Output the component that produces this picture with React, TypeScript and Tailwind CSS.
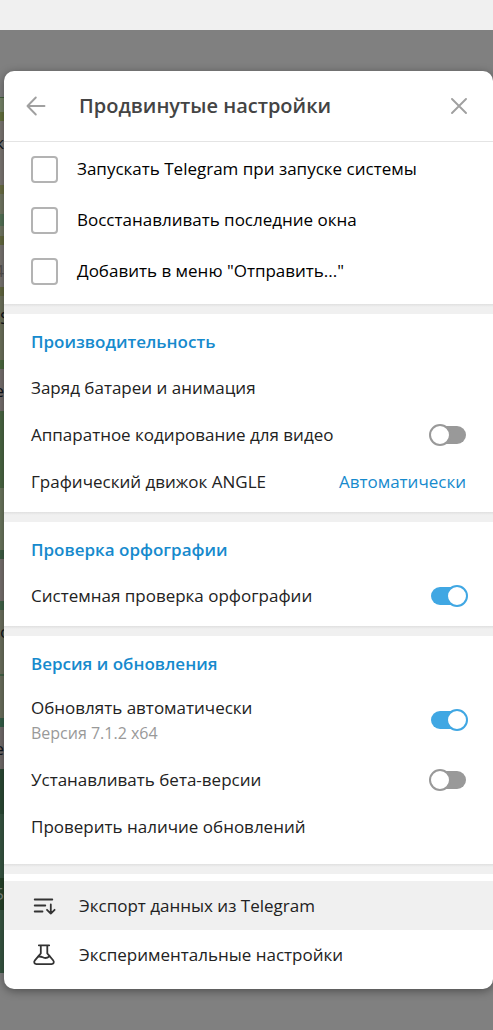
import React, { useState } from 'react';
import { clsx } from 'clsx';

interface ToggleRowProps {
  label: string;
  hint?: string;
  defaultChecked?: boolean;
}

const startupOptions = [
  'Запускать Telegram при запуске системы',
  'Восстанавливать последние окна',
  'Добавить в меню "Отправить..."',
];

// Slice of the dimmed chat that stays visible beside the dialog
const chatBands = [
  { className: 'h-px bg-[#41613c]' },
  { className: 'h-[14px] bg-[#78866a]' },
  { className: 'h-[9px] bg-[#66733f]' },
  { className: 'h-16 bg-[#7d7874]', text: 'к', textClass: 'pt-2.5' },
  { className: 'h-[9px] bg-[#6c7045]' },
  { className: 'h-5 bg-[#747964]' },
  { className: 'h-3 bg-[#557457]' },
  { className: 'h-[10px] bg-[#747964]' },
  { className: 'h-[9px] bg-[#666b40]' },
  { className: 'h-[42px] bg-[#7a7672]', text: '4', textClass: 'pt-3.5 text-[#55524f]' },
  { className: 'h-[9px] bg-[#636940]' },
  { className: 'h-16 bg-[#6e735c]', text: 'S', textClass: 'pt-2.5', start: true },
  { className: 'h-[9px] bg-[#4d6b40]' },
  { className: 'h-[42px] bg-[#77716f]', text: 'е', textClass: 'pt-2.5' },
  { className: 'h-[77px] bg-[#4b6844]' },
  { className: 'h-[62px] bg-[#6c775f]' },
  { className: 'h-[9px] bg-[#3f5f45]' },
  { className: 'h-[42px] bg-[#77716e]' },
  { className: 'h-[9px] bg-[#426449]' },
  { className: 'h-16 bg-[#6d715f]', text: 'с', textClass: 'pt-2.5', start: true },
  { className: 'h-0.5 bg-[#456448]' },
  { className: 'h-[42px] bg-[#6d715f]' },
  { className: 'h-[9px] bg-[#355f48]' },
  { className: 'h-[42px] bg-[#736d6c]', text: 'е', textClass: 'pt-2.5' },
  { className: 'h-[45px] bg-[#2b4a35]' },
  { className: 'h-16 bg-[#375642]' },
  { className: 'h-8 bg-[#264229]', text: '5', textClass: 'pt-1 text-[#7d867f]' },
  { className: 'h-[63px] bg-[#375642]' },
];

const ChatEdge = () => (
  <div className="mt-[26px] w-1 shrink-0" aria-hidden="true">
    {chatBands.map((band, i) => (
      <div
        key={i}
        className={clsx(
          'flex overflow-hidden text-[17px] leading-6 text-[#10151c]',
          band.start ? 'justify-start' : 'justify-end',
          band.className
        )}
      >
        {band.text && <span className={band.textClass}>{band.text}</span>}
      </div>
    ))}
  </div>
);

const BackIcon = () => (
  <svg width="20" height="20" viewBox="0 0 20 20" fill="none" stroke="#a0a0a0" strokeWidth="1.9" strokeLinecap="round" strokeLinejoin="round">
    <path d="M18.500 10H1.500M9.800 1.500 1.500 10l8.300 8.500" />
  </svg>
);

const CloseIcon = () => (
  <svg width="16" height="16" viewBox="0 0 16 16" fill="none" stroke="#a0a0a0" strokeWidth="1.9" strokeLinecap="round">
    <path d="M1 1l14 14M15 1 1 15" />
  </svg>
);

const ExportIcon = () => (
  <svg width="24" height="24" viewBox="0 0 24 24" fill="none" stroke="#333" strokeWidth="1.8" strokeLinecap="round" strokeLinejoin="round">
    <path d="M2.700 5.500H20.300M2.700 11.500H13.300M2.700 17.500H10.500" />
    <path d="M18.800 10.500V19.500M15 15.800l3.800 3.800 3.800-3.800" />
  </svg>
);

const FlaskIcon = () => (
  <svg width="24" height="24" viewBox="0 0 24 24" fill="none" stroke="#333" strokeWidth="1.8" strokeLinecap="round" strokeLinejoin="round">
    <path d="M6.800 2.300H17.200M8.800 2.300V10.400L2.900 17.300C1.500 19 2.300 21.100 4.500 21.100H19.500C21.700 21.100 22.500 19 21.100 17.300L15.300 10.400V2.300" />
    <path d="M6.300 13.600C8.500 13.200 9.900 13.900 11.800 14.700C13.700 15.400 15.500 14.900 17.500 13.200" />
  </svg>
);

const Divider = () => (
  <div className="h-2.5 bg-[#f0f0f0] bg-linear-to-b from-[#e0e0e0] from-0% to-[#f0f0f0] to-30%" />
);

const SectionTitle = ({ children }: { children: React.ReactNode }) => (
  <h2 className="flex h-[45px] items-center font-semibold text-[#168acd]">{children}</h2>
);

const ToggleRow = ({ label, hint, defaultChecked = false }: ToggleRowProps) => {
  const [checked, setChecked] = useState(defaultChecked);

  return (
    <label className={clsx('flex cursor-pointer items-center justify-between', hint ? 'h-[70px] pb-0.5' : 'h-[47px]')}>
      <span className="flex flex-col">
        <span className="leading-[26px]">{label}</span>
        {hint && <span className="text-base leading-6 text-[#999]">{hint}</span>}
      </span>
      <input
        type="checkbox"
        role="switch"
        checked={checked}
        onChange={(e) => setChecked(e.target.checked)}
        className="relative h-[18px] w-[35px] shrink-0 cursor-pointer appearance-none rounded-full bg-[#999] before:absolute before:-top-0.5 before:-left-0.5 before:size-[22px] before:rounded-full before:border-2 before:border-[#999] before:bg-white checked:bg-[#40a7e3] checked:before:left-[15px] checked:before:border-[#40a7e3]"
      />
    </label>
  );
};

const LinkRow = ({ label, value }: { label: string; value?: string }) => (
  <button type="button" className="flex h-[47px] w-full cursor-pointer items-center justify-between text-left">
    <span>{label}</span>
    {value && <span className="text-[#168acd]">{value}</span>}
  </button>
);

export default function App() {
  return (
    <div className="min-h-screen bg-[#808080] font-['Open_Sans','Noto_Sans',sans-serif] text-[17px] text-[#222]">
      <div className="h-[30px] bg-[#f0f0f0]" />

      <div className="flex items-start pt-[41px]">
        <ChatEdge />

        <main className="min-w-0 flex-1 overflow-hidden rounded-[10px] bg-white shadow-[0_2px_10px_rgba(0,0,0,0.4)]">
          <header className="flex h-[71px] items-center border-b border-[#e4e4e4] pr-[26px] pl-[22px]">
            <button type="button" aria-label="Назад" className="cursor-pointer">
              <BackIcon />
            </button>
            <h1 className="flex-1 pl-[33px] text-xl font-semibold text-[#444]">Продвинутые настройки</h1>
            <button type="button" aria-label="Закрыть" className="cursor-pointer">
              <CloseIcon />
            </button>
          </header>

          <div className="px-[27px] pt-0.5 pb-[7px] text-black">
            {startupOptions.map((option) => (
              <label key={option} className="flex h-[51px] cursor-pointer items-center gap-[19px]">
                <input
                  type="checkbox"
                  className="size-[27px] shrink-0 cursor-pointer appearance-none rounded-sm border-2 border-[#b3b3b3] bg-white checked:border-[#40a7e3] checked:bg-[#40a7e3]"
                />
                <span className="pb-0.5">{option}</span>
              </label>
            ))}
          </div>
          <Divider />

          {/* Performance */}
          <section className="px-[27px] pt-[5px] pb-[7px]">
            <SectionTitle>Производительность</SectionTitle>
            <LinkRow label="Заряд батареи и анимация" />
            <ToggleRow label="Аппаратное кодирование для видео" />
            <LinkRow label="Графический движок ANGLE" value="Автоматически" />
          </section>
          <Divider />

          {/* Spell checker */}
          <section className="px-[27px] pt-[5px] pb-[7px]">
            <SectionTitle>Проверка орфографии</SectionTitle>
            <ToggleRow label="Системная проверка орфографии" defaultChecked />
          </section>
          <Divider />

          {/* Version and updates */}
          <section className="px-[27px] pt-[5px] pb-3.5">
            <SectionTitle>Версия и обновления</SectionTitle>
            <ToggleRow label="Обновлять автоматически" hint="Версия 7.1.2 x64" defaultChecked />
            <ToggleRow label="Устанавливать бета-версии" />
            <LinkRow label="Проверить наличие обновлений" />
          </section>
          <Divider />

          <nav className="pt-[7px] pb-2.5">
            <button type="button" className="flex h-[49px] w-full cursor-pointer items-center gap-[23px] bg-[#f0f0f0] px-7 text-left">
              <ExportIcon />
              Экспорт данных из Telegram
            </button>
            <button type="button" className="flex h-[49px] w-full cursor-pointer items-center gap-[23px] px-7 text-left hover:bg-[#f0f0f0]">
              <FlaskIcon />
              Экспериментальные настройки
            </button>
          </nav>
        </main>
      </div>
    </div>
  );
}
